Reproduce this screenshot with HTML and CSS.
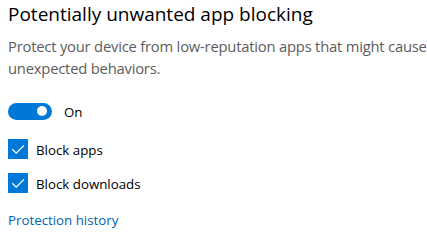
FILE: index.html
```html
<!DOCTYPE html>
<html lang="en">
<head>
<meta charset="utf-8">
<title>Potentially unwanted app blocking</title>
<link rel="stylesheet" href="styles.css">
</head>
<body>
<section class="panel">
  <h2 class="title">Potentially unwanted app blocking</h2>
  <p class="desc">Protect your device from low-reputation apps that might cause<br>unexpected behaviors.</p>
  <div class="toggle-row">
    <span class="toggle"><span class="knob"></span></span>
    <span class="label">On</span>
  </div>
  <div class="checks">
    <label class="check-row">
      <span class="box"><svg viewBox="0 0 20 20" width="20" height="20"><path d="M4.3 10.3 L8.2 14.2 L16 6.4" fill="none" stroke="#fff" stroke-width="1.3"/></svg></span>
      <span class="label">Block apps</span>
    </label>
    <label class="check-row">
      <span class="box"><svg viewBox="0 0 20 20" width="20" height="20"><path d="M4.3 10.3 L8.2 14.2 L16 6.4" fill="none" stroke="#fff" stroke-width="1.3"/></svg></span>
      <span class="label">Block downloads</span>
    </label>
  </div>
  <a class="link" href="#">Protection history</a>
</section>
</body>
</html>
```
FILE: styles.css
```css
html, body {
  margin: 0;
  padding: 0;
  background: #ffffff;
}
body {
  font-family: "Open Sans", "Noto Sans", sans-serif;
  color: #000;
}
.panel {
  display: flex;
  flex-direction: column;
  align-items: flex-start;
  padding: 0 0 0 8px;
}
.title {
  margin: 0;
  font-size: 19px;
  line-height: 28px;
  font-weight: 400;
  color: #000;
}
.desc {
  margin: 7px 0 0 0;
  font-size: 14.8px;
  line-height: 22px;
  letter-spacing: -0.22px;
  color: #5d5d5d;
  white-space: nowrap;
}
.toggle-row {
  display: flex;
  align-items: center;
  margin-top: 22px;
  height: 20px;
}
.toggle {
  width: 44px;
  height: 17px;
  border-radius: 9px;
  background: #0078d7;
  display: flex;
  align-items: center;
  justify-content: flex-end;
  padding-right: 5px;
  box-sizing: border-box;
}
.knob {
  width: 10px;
  height: 10px;
  border-radius: 50%;
  background: #fff;
}
.label {
  font-size: 13.3px;
  line-height: 20px;
  color: #000;
  padding-top: 1px;
}
.toggle-row .label {
  margin-left: 12px;
}
.checks {
  display: flex;
  flex-direction: column;
  gap: 14px;
  margin-top: 18px;
}
.check-row {
  display: flex;
  align-items: center;
  height: 20px;
}
.box {
  width: 20px;
  height: 20px;
  background: #0078d7;
  display: block;
}
.box svg {
  display: block;
}
.check-row .label {
  margin-left: 8px;
}
.link {
  margin-top: 17px;
  font-size: 13.3px;
  line-height: 20px;
  color: #0063b1;
  text-decoration: none;
}
```
